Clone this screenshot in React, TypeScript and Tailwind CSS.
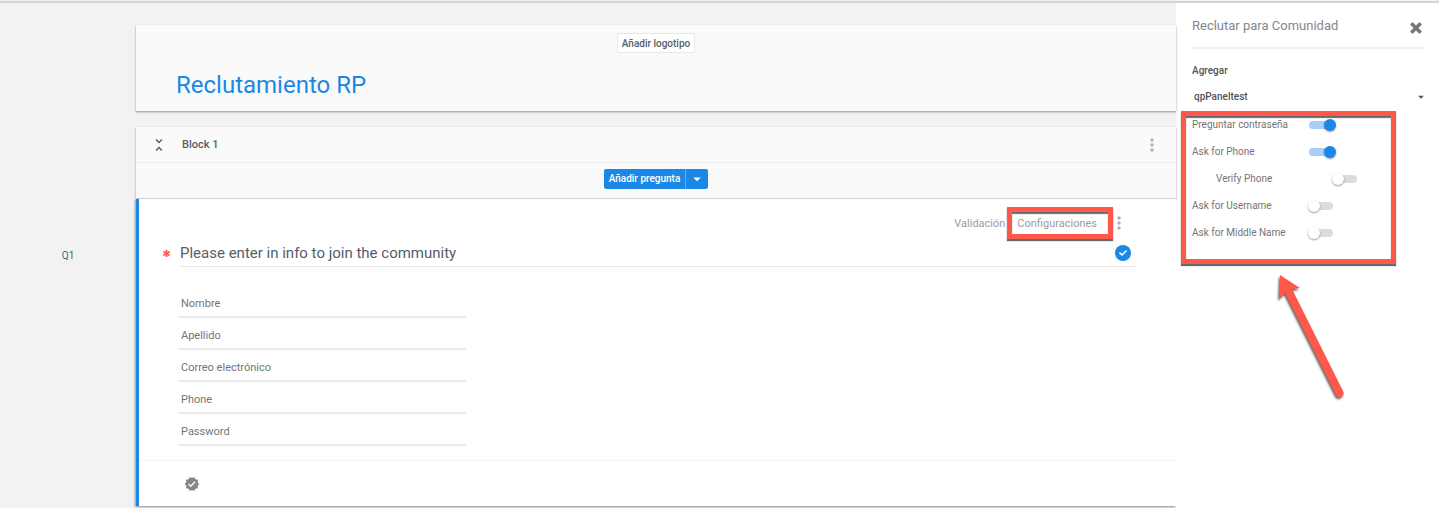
import { useState } from "react"
import { FaAsterisk, FaCheck } from "react-icons/fa"
import { MdArrowDropDown, MdMoreVert, MdUnfoldLess, MdVerified } from "react-icons/md"

const fields = [
  { id: "nombre", label: "Nombre", type: "text" },
  { id: "apellido", label: "Apellido", type: "text" },
  { id: "correo", label: "Correo electrónico", type: "email" },
  { id: "phone", label: "Phone", type: "tel" },
  { id: "password", label: "Password", type: "password" },
]

const options = [
  { id: "ask-password", label: "Preguntar contraseña", on: true, nested: false },
  { id: "ask-phone", label: "Ask for Phone", on: true, nested: false },
  { id: "verify-phone", label: "Verify Phone", on: false, nested: true },
  { id: "ask-username", label: "Ask for Username", on: false, nested: false },
  { id: "ask-middle", label: "Ask for Middle Name", on: false, nested: false },
]

function Toggle({ id, defaultOn }: { id: string; defaultOn: boolean }) {
  const [on, setOn] = useState(defaultOn)

  return (
    <input
      id={id}
      type="checkbox"
      role="switch"
      checked={on}
      onChange={(e) => setOn(e.target.checked)}
      className="grid h-3 w-7 shrink-0 cursor-pointer appearance-none items-center before:col-start-1 before:row-start-1 before:ml-px before:h-2 before:w-6 before:rounded-full before:bg-[#dcdcdc] before:content-[''] after:col-start-1 after:row-start-1 after:size-3 after:rounded-full after:bg-white after:shadow-[0_1px_2px_rgba(0,0,0,0.4)] after:content-[''] checked:before:bg-[#a9cef5] checked:after:justify-self-end checked:after:bg-[#1b87e6]"
    />
  )
}

function Highlight({ className }: { className: string }) {
  return (
    <div
      className={`pointer-events-none absolute z-20 border-5 border-[#ff584a] shadow-[0_2px_1px_#666a6e,inset_0_2px_1px_#666a6e] ${className}`}
    />
  )
}

function SurveyHeader() {
  return (
    <header className="flex h-[86px] flex-col bg-[#fafafa] px-10 pt-2 shadow-[0_1px_2px_rgba(0,0,0,0.4)]">
      <button
        type="button"
        className="h-5 self-center rounded-xs border border-[#e8e8e8] bg-white px-1 text-[10px] leading-5 font-medium text-[#545e6b]"
      >
        Añadir logotipo
      </button>
      <h1 className="mt-4 text-2xl leading-8 text-[#1b87e6]">Reclutamiento RP</h1>
    </header>
  )
}

function Question() {
  return (
    <article className="border-l-3 border-[#1b87e6] bg-white shadow-[-1px_1px_2px_rgba(0,0,0,0.4)]">
      <div className="flex h-10 items-end justify-end gap-3 pr-[47px] text-[11px] leading-[34px] text-[#9b9b9b]">
        <a href="#validacion" className="h-8">
          Validación
        </a>
        <div className="relative h-8 pr-3">
          <a href="#configuraciones">Configuraciones</a>
          <Highlight className="-left-2.5 -right-1 top-0 h-8" />
        </div>
        <button type="button" aria-label="Más opciones" className="-ml-3 h-8 text-[#b0b0b0]">
          <MdMoreVert className="size-5" />
        </button>
      </div>
      <div className="ml-6 mr-10 flex h-7 items-center">
        <FaAsterisk className="size-[7px] shrink-0 stroke-[#ff584a] stroke-[50px] text-[#ff584a]" />
        <div className="ml-2.5 flex h-full flex-1 items-center justify-between border-b border-[#e8e8e8] pr-[5px]">
          <h3 className="text-[15px] leading-6 text-[#545e6b]">Please enter in info to join the community</h3>
          <span className="flex size-4 items-center justify-center rounded-full bg-[#1b87e6]">
            <FaCheck className="size-2 text-white" />
          </span>
        </div>
      </div>
      <div className="ml-10 mt-[19px] w-[287px] pb-3.5">
        {fields.map((field) => (
          <input
            key={field.id}
            id={field.id}
            type={field.type}
            aria-label={field.label}
            placeholder={field.label}
            className="block h-8 w-full border-b-2 border-[#ebebeb] px-0.5 pt-1 text-[11px] outline-none placeholder:text-[#757575]"
          />
        ))}
      </div>
      <footer className="flex h-[46px] items-center border-t border-[#f5f5f5] px-[45px]">
        <MdVerified className="size-4 text-[#85878b]" />
      </footer>
    </article>
  )
}

function Block() {
  return (
    <section className="mt-4">
      <div className="bg-[#fafafa] shadow-[0_1px_2px_rgba(0,0,0,0.4)]">
        <div className="flex h-9 items-center border-b border-[#ececec] px-3.5">
          <button type="button" aria-label="Contraer bloque">
            <MdUnfoldLess className="size-[18px] text-[#545e6b]" />
          </button>
          <h2 className="ml-3.5 flex-1 text-[11px] leading-4 font-medium text-[#545e6b]">Block 1</h2>
          <button type="button" aria-label="Opciones del bloque">
            <MdMoreVert className="size-5 text-[#b0b0b0]" />
          </button>
        </div>
        <div className="flex h-9 items-center justify-center border-b border-[#d0d0d0] pb-[3px]">
          <div className="flex h-5 overflow-hidden rounded-xs bg-[#1b87e6] text-[10px] leading-5 font-medium text-white">
            <button type="button" className="px-[5px]">
              Añadir pregunta
            </button>
            <button type="button" aria-label="Más tipos" className="border-l border-[#63aeee] px-0.5">
              <MdArrowDropDown className="size-[18px]" />
            </button>
          </div>
        </div>
      </div>
      {/* clips the right side of the question's shadow so it runs into the panel */}
      <div className="-ml-1 overflow-hidden pl-1 pb-1">
        <Question />
      </div>
    </section>
  )
}

function RecruitPanel() {
  return (
    <aside className="w-[263px] shrink-0 bg-white pl-4 pr-[15px]">
      <div className="flex h-[46px] items-center justify-between border-b-2 border-[#f0f0f0]">
        <h2 className="pt-0.5 text-[13px] leading-5 text-[#85878b]">Reclutar para Comunidad</h2>
        <button type="button" aria-label="Cerrar" className="mr-0.5 mt-1.5">
          <svg viewBox="0 0 12 12" className="size-3" stroke="#757679" strokeWidth="3.4">
            <path d="M1.3 1.3 10.7 10.7M10.7 1.3 1.3 10.7" />
          </svg>
        </button>
      </div>
      <label htmlFor="panel" className="mt-3 block text-[10px] leading-5 font-medium text-[#545454]">
        Agregar
      </label>
      <div className="mt-1.5 grid h-5 items-center">
        <select
          id="panel"
          className="col-start-1 row-start-1 appearance-none bg-transparent px-0.5 text-[10px] leading-5 font-medium text-[#545454]"
        >
          <option>qpPaneltest</option>
        </select>
        <MdArrowDropDown className="pointer-events-none col-start-1 row-start-1 -mr-1 size-3.5 justify-self-end text-[#545454]" />
      </div>
      <div className="relative mt-1">
        <Highlight className="-left-[11px] top-0 h-[153px] w-[215px]" />
        {options.map((option) => (
          <div key={option.id} className={option.nested ? "flex h-[27px] items-center pl-6" : "flex h-[27px] items-center"}>
            <label htmlFor={option.id} className="w-[116px] text-[10px] leading-4 whitespace-nowrap text-[#757575]">
              {option.label}
            </label>
            <Toggle id={option.id} defaultOn={option.on} />
          </div>
        ))}
        <svg viewBox="0 0 76 132" className="absolute left-[83px] top-[161px] z-20 h-[132px] w-[76px] drop-shadow-[-1px_2px_1px_rgba(60,60,60,0.8)]">
          <path d="M5 3 25 16 17 17 68 119A4 4 0 0 1 61 123L10 21 4 27Z" fill="#ff584a" />
        </svg>
      </div>
    </aside>
  )
}

export default function App() {
  return (
    <div className="flex min-h-screen flex-col overflow-x-hidden bg-[#f2f2f2] font-[Roboto,'Noto_Sans',sans-serif]">
      <div className="mt-px h-0.5 bg-[#d2d4d3]" />
      <div className="flex flex-1">
        <div className="flex w-[136px] shrink-0 justify-center pt-[245px] text-[10px] leading-4 text-[#545e6b]">
          <span>Q1</span>
        </div>
        <main className="relative z-10 -mb-1 min-w-0 flex-1 pt-[22px]">
          <SurveyHeader />
          <Block />
        </main>
        <RecruitPanel />
      </div>
    </div>
  )
}
